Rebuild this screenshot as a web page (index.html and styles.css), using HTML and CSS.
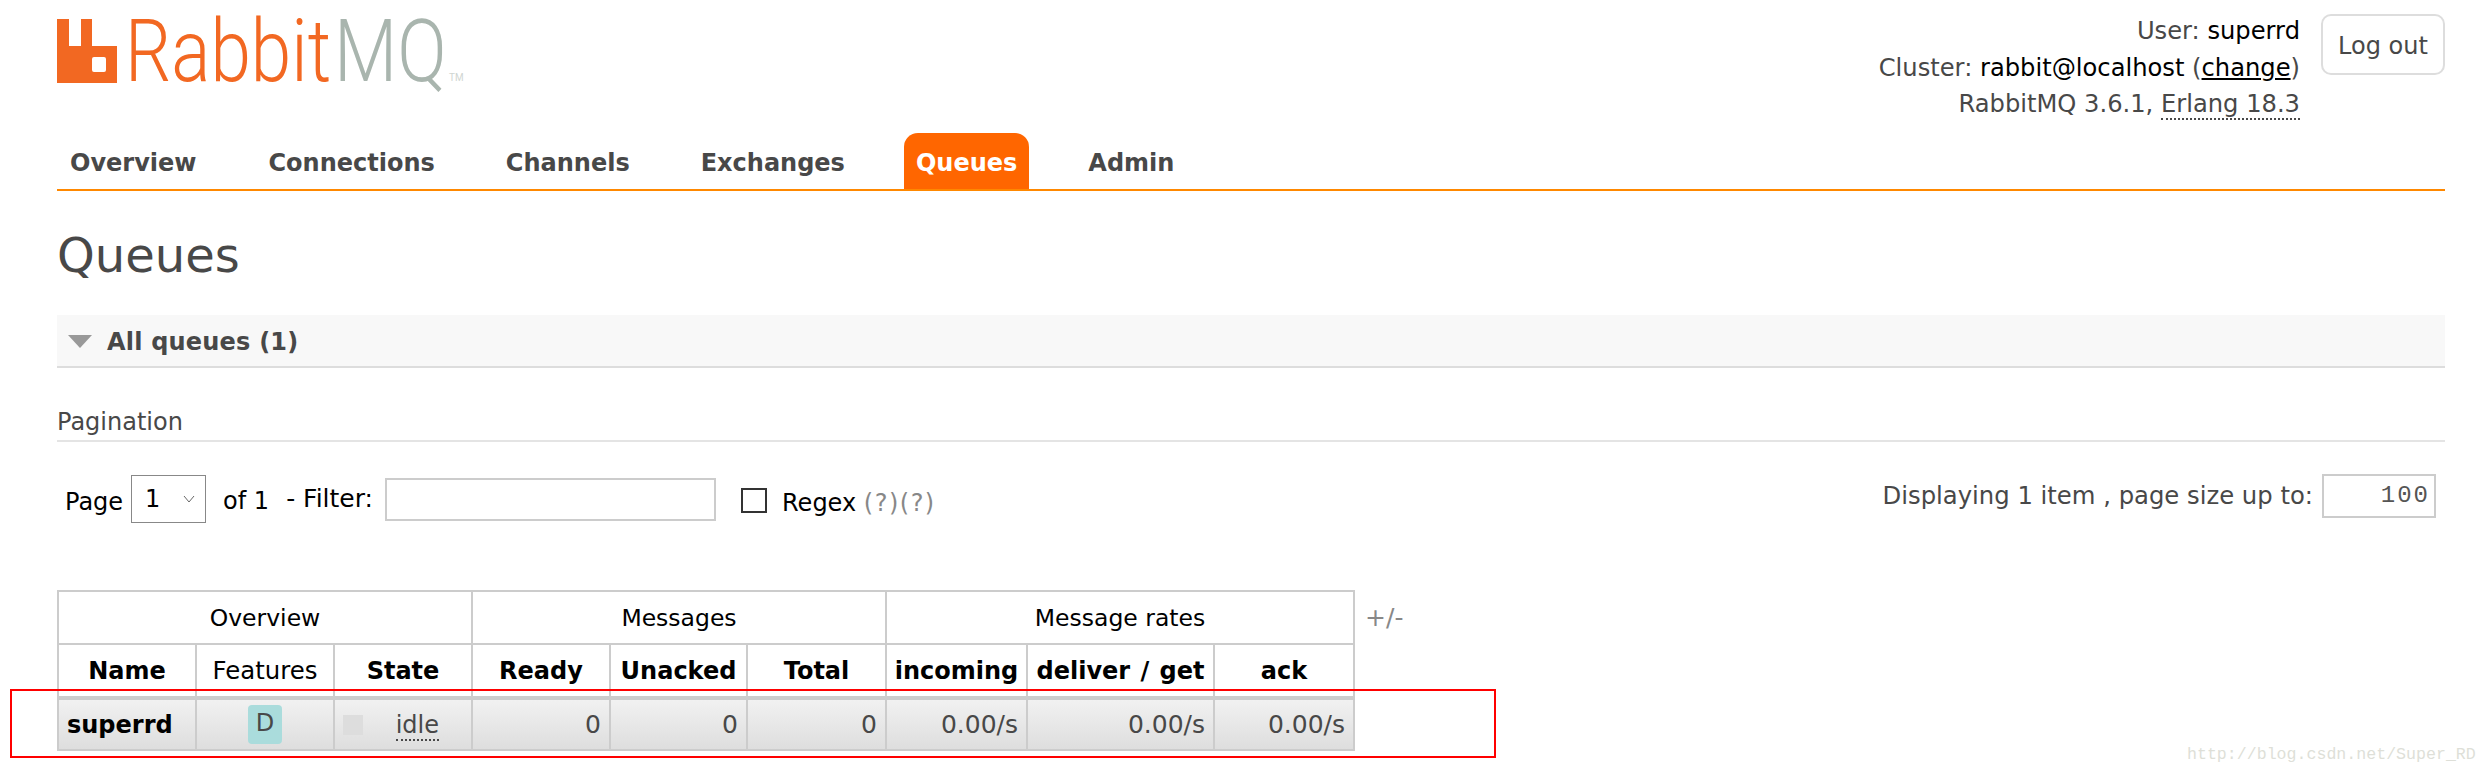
FILE: index.html
```html
<!DOCTYPE html>
<html lang="en">
<head>
<meta charset="utf-8">
<title>RabbitMQ Management</title>
<link rel="stylesheet" href="styles.css">
</head>
<body>
<div class="page">
  <header class="header">
    <svg class="logo" width="410" height="110" viewBox="0 -17 410 110">
      <path class="logo-icon" d="M0 2H12V29H24V2H35V29H60V66H0Z M37 40Q35 40 35 42V53Q35 55 37 55H47Q49 55 49 53V42Q49 40 47 40Z" fill-rule="evenodd"/>
      <text class="logo-rabbit" transform="translate(68 64) scale(.838 1)">Rabbit</text>
      <text class="logo-mq" transform="translate(277 64) scale(.84 1)">MQ</text>
      <text class="logo-tm" transform="translate(392 64) scale(.9 1)">TM</text>
    </svg>
    <div class="login">
      <div class="login-lines">
        <p>User: <b class="val">superrd</b></p>
        <p>Cluster: <b class="val">rabbit@localhost</b> (<a class="change" href="#">change</a>)</p>
        <p>RabbitMQ 3.6.1, <abbr class="dotted">Erlang 18.3</abbr></p>
      </div>
      <button class="logout">Log out</button>
    </div>
  </header>
  <nav class="nav">
    <a class="tab t-overview" href="#">Overview</a>
    <a class="tab t-conn" href="#">Connections</a>
    <a class="tab t-chan" href="#">Channels</a>
    <a class="tab t-exch" href="#">Exchanges</a>
    <a class="tab t-queues active" href="#">Queues</a>
    <a class="tab t-admin" href="#">Admin</a>
  </nav>
  <h1 class="title">Queues</h1>
  <h2 class="section-head"><span class="tri"></span>All queues (1)</h2>
  <h3 class="pag-head">Pagination</h3>
  <div class="toolbar">
    <div class="tool-left">
      <span class="page-label">Page</span>
      <span class="select">1<svg class="chev" width="12" height="8" viewBox="0 0 12 8"><path d="M1 1L6 7L11 1" fill="none" stroke="#666" stroke-width="1"/></svg></span>
      <span class="of">of 1</span>
      <span class="filter">- Filter:</span>
      <span class="input filter-input"></span>
      <span class="check"></span>
      <span class="regex">Regex <span class="help">(?)(?)</span></span>
    </div>
    <div class="tool-right">
      <span class="disp">Displaying 1 item , page size up to:</span>
      <span class="input size-input">100</span>
    </div>
  </div>
  <div class="table-row">
    <table class="queues">
      <colgroup>
        <col class="c1"><col class="c2"><col class="c3"><col class="c4"><col class="c5"><col class="c6"><col class="c7"><col class="c8"><col class="c9">
      </colgroup>
      <thead>
        <tr class="group">
          <th colspan="3">Overview</th>
          <th colspan="3">Messages</th>
          <th colspan="3">Message rates</th>
        </tr>
        <tr class="cols">
          <th>Name</th>
          <th class="plain">Features</th>
          <th>State</th>
          <th>Ready</th>
          <th>Unacked</th>
          <th>Total</th>
          <th>incoming</th>
          <th>deliver / get</th>
          <th>ack</th>
        </tr>
      </thead>
      <tbody>
        <tr>
          <td class="name">superrd</td>
          <td class="center"><abbr class="badge">D</abbr></td>
          <td class="state"><span class="square"></span><abbr class="dotted">idle</abbr></td>
          <td>0</td>
          <td>0</td>
          <td>0</td>
          <td>0.00/s</td>
          <td>0.00/s</td>
          <td>0.00/s</td>
        </tr>
      </tbody>
    </table>
    <span class="plusminus">+/-</span>
  </div>
</div>
<div class="red-box"></div>
<div class="watermark">http://blog.csdn.net/Super_RD</div>
</body>
</html>
```
FILE: styles.css
```css
* { box-sizing: border-box; }
html, body { margin: 0; padding: 0; }
body {
  position: relative;
  height: 773px;
  overflow: hidden;
  background: #fff;
  color: #484848;
  font-family: "DejaVu Sans", Verdana, sans-serif;
  font-size: 24px;
}
.page { padding: 0 43px 0 57px; }
.header { display: flex; justify-content: space-between; height: 133px; }
.logo { flex: none; }
.logo-icon { fill: #f26822; }
.logo-rabbit { font-family: Roboto, sans-serif; font-weight: 300; font-size: 87px; fill: #f26822; }
.logo-mq { font-family: Roboto, sans-serif; font-weight: 300; font-size: 87px; fill: #a9b5ae; }
.logo-tm { font-family: Roboto, sans-serif; font-size: 11px; fill: #d0d6d2; }
.login { display: flex; align-items: flex-start; }
.login-lines { text-align: right; padding-top: 13px; margin-right: 21px; line-height: 36.5px; font-size: 24.2px; }
.login-lines p { margin: 0; }
.val { font-weight: normal; color: #000; }
.change { color: #000; text-decoration: underline; }
.dotted { text-decoration: none; border-bottom: 2px dotted #484848; }
.logout {
  width: 124px; height: 61px; margin-top: 14px; padding: 2px 0 0;
  background: #fff; border: 2px solid #ddd; border-radius: 10px;
  color: #484848; font: 24px "DejaVu Sans", Verdana, sans-serif;
}
.nav { display: flex; height: 58px; border-bottom: 2px solid #f80; }
.tab {
  display: block; height: 56px; line-height: 60px;
  font-weight: bold; color: #484848; text-decoration: none;
  margin-left: 13px;
}
.t-conn { margin-left: 72px; }
.t-chan { margin-left: 71px; }
.t-exch { margin-left: 71px; }
.t-queues { margin-left: 59px; }
.t-admin { margin-left: 59px; }
.active { background: #f60; color: #fff; border-radius: 14px 14px 0 0; padding: 0 12px; }
.title { margin: 35px 0 0; height: 89px; line-height: 58px; font-weight: normal; font-size: 48px; color: #484848; }
.section-head {
  display: flex; align-items: center; height: 53px; margin: 0;
  padding: 2px 0 0 11px; background: #f8f8f8; border-bottom: 2px solid #ddd;
  font-size: 24px; font-weight: bold; color: #484848; letter-spacing: .2px;
}
.tri { width: 0; height: 0; margin-right: 15px; border: 12px solid transparent; border-top: 13px solid #999; border-bottom: 0; }
.pag-head { margin: 40px 0 0; height: 34px; line-height: 28px; font-size: 24px; font-weight: normal; border-bottom: 2px solid #e4e4e4; }
.toolbar { display: flex; justify-content: space-between; height: 148px; padding-top: 33px; }
.tool-left, .tool-right { display: flex; align-items: flex-start; }
.tool-left { color: #000; }
.page-label { margin: 9px 0 0 8px; line-height: 36px; }
.select {
  display: flex; justify-content: space-between; align-items: center;
  width: 75px; height: 48px; margin-left: 8px; padding: 0 10px 0 13px;
  border: 1px solid #888; background: #fff;
}
.of { margin: 8px 0 0 17px; line-height: 36px; }
.filter { margin: 6px 0 0 17px; line-height: 36px; font-size: 25px; }
.input { display: block; background: #fff; border: 2px solid #ccc; }
.filter-input { width: 331px; height: 43px; margin: 3px 0 0 12px; }
.check { width: 26px; height: 25px; margin: 13px 0 0 25px; border: 2px solid #333; background: #fff; }
.regex { margin: 10px 0 0 15px; line-height: 36px; white-space: nowrap; }
.help { color: #888; letter-spacing: 1.5px; }
.tool-right { padding-right: 9px; }
.disp { margin: 3px 9px 0 0; line-height: 36px; font-size: 24.3px; }
.size-input {
  width: 114px; height: 44px; margin-top: -1px; padding: 0 4px 0 0;
  line-height: 40px; text-align: right; color: #555;
  font-family: "Liberation Mono", monospace; font-size: 24px; letter-spacing: 2px; font-weight: normal;
}
.table-row { display: flex; align-items: flex-start; }
.queues { table-layout: fixed; width: 1296px; border-collapse: collapse; color: #000; }
.c1 { width: 138px; } .c2 { width: 138px; } .c3 { width: 138px; }
.c4 { width: 138px; } .c5 { width: 137px; } .c6 { width: 139px; }
.c7 { width: 141px; } .c8 { width: 187px; } .c9 { width: 140px; }
.queues th, .queues td { border: 2px solid #ccc; padding: 0; }
.group th { height: 53px; font-weight: normal; font-size: 23.5px; }
.cols th { height: 54px; font-weight: bold; border-bottom-width: 4px; white-space: nowrap; word-spacing: 2px; }
.cols th.plain { font-weight: normal; font-size: 24.4px; }
.queues td {
  height: 52px; padding-right: 8px; text-align: right; color: #484848; font-size: 25px;
  background: linear-gradient(#f1f1f1, #dedede);
}
.queues td.name { padding: 0 0 0 8px; text-align: left; font-weight: bold; font-size: 24px; color: #000; }
.queues td.center { padding: 0; text-align: center; font-size: 24px; }
.badge {
  display: inline-block; width: 34px; height: 39px; line-height: 37px;
  background: #aadcdc; border-radius: 4px; color: #484848; vertical-align: middle;
}
.queues td.state { position: relative; padding: 0 32px 0 8px; font-size: 24px; }
.square { position: absolute; left: 8px; top: 15px; width: 20px; height: 20px; background: #ddd; }
.plusminus { margin: 13px 0 0 10px; color: #888; font-size: 25px; }
.red-box { position: absolute; left: 10px; top: 689px; width: 1486px; height: 69px; border: 2px solid #f00; pointer-events: none; }
.watermark { position: absolute; left: 2187px; top: 745px; font-family: "Liberation Mono", monospace; font-size: 16.6px; color: #dedfd8; }
```
